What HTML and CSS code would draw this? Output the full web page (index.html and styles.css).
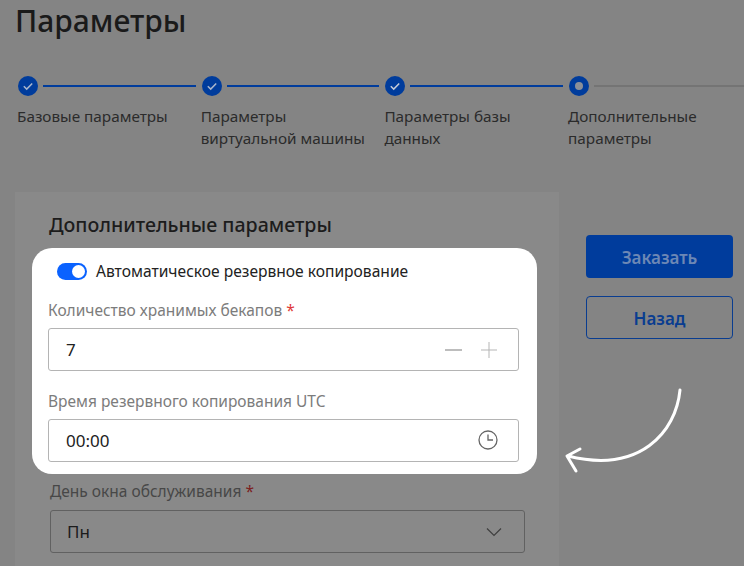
FILE: index.html
```html
<!DOCTYPE html>
<html lang="en">
<head>
  <meta charset="UTF-8">
  <title>Параметры</title>
  <link rel="stylesheet" href="styles.css">
</head>
<body>

<h1 class="page-title">Параметры</h1>

<!-- Stepper -->
<ol class="steps">
  <li class="step done">
    <div class="step-head">
      <svg class="step-icon" viewBox="0 0 20 20"><circle cx="10" cy="10" r="10" fill="#003c9c"/><path d="M5.8 10.3l2.9 2.8 5.5-5.6" fill="none" stroke="#a9b6cc" stroke-width="1.5"/></svg>
      <span class="step-line"></span>
    </div>
    <p>Базовые параметры</p>
  </li>
  <li class="step done">
    <div class="step-head">
      <svg class="step-icon" viewBox="0 0 20 20"><circle cx="10" cy="10" r="10" fill="#003c9c"/><path d="M5.8 10.3l2.9 2.8 5.5-5.6" fill="none" stroke="#a9b6cc" stroke-width="1.5"/></svg>
      <span class="step-line"></span>
    </div>
    <p>Параметры виртуальной машины</p>
  </li>
  <li class="step done">
    <div class="step-head">
      <svg class="step-icon" viewBox="0 0 20 20"><circle cx="10" cy="10" r="10" fill="#003c9c"/><path d="M5.8 10.3l2.9 2.8 5.5-5.6" fill="none" stroke="#c4cbd8" stroke-width="1.5"/></svg>
      <span class="step-line"></span>
    </div>
    <p>Параметры базы данных</p>
  </li>
  <li class="step current">
    <div class="step-head">
      <svg class="step-icon" viewBox="0 0 20 20"><circle cx="10" cy="10" r="10" fill="#003c9c"/><circle cx="10" cy="10" r="4" fill="#8a8f98"/></svg>
      <span class="step-line"></span>
    </div>
    <p>Дополнительные параметры</p>
  </li>
</ol>

<div class="content">
  <section class="card">
    <h2>Дополнительные параметры</h2>
    <div class="dim-field">
      <label class="field-label">День окна обслуживания <span class="req">*</span></label>
      <div class="select">
        <span>Пн</span>
        <svg class="chevron" viewBox="0 0 16 10"><path d="M1 1.5l7 7 7-7" fill="none" stroke="#3f3f3f" stroke-width="1.2"/></svg>
      </div>
    </div>
  </section>

  <aside class="actions">
    <button class="btn btn-primary">Заказать</button>
    <button class="btn btn-outline">Назад</button>
  </aside>
</div>

<!-- Highlighted part of the form -->
<div class="highlight">
  <div class="toggle-row">
    <span class="toggle"><span class="knob"></span></span>
    <span>Автоматическое резервное копирование</span>
  </div>

  <label class="field-label light">Количество хранимых бекапов <span class="req">*</span></label>
  <div class="input">
    <span>7</span>
    <div class="stepper-btns">
      <svg viewBox="0 0 18 18"><path d="M0 9h17" stroke="#9a9a9a" stroke-width="1.3"/></svg>
      <svg viewBox="0 0 18 18"><path d="M1 9h16M9 1v16" stroke="#b5b5b5" stroke-width="1"/></svg>
    </div>
  </div>

  <label class="field-label light second">Время резервного копирования UTC</label>
  <div class="input">
    <span>00:00</span>
    <svg class="clock" viewBox="0 0 20 20"><circle cx="10" cy="10" r="9" fill="none" stroke="#666" stroke-width="1.3"/><path d="M10 4.5V10h5" fill="none" stroke="#666" stroke-width="1.3"/></svg>
  </div>
</div>

<svg class="arrow" viewBox="0 0 744 566"><path d="M680 390C676 432 640 474 568 456M580 449l-13 7 9 15" fill="none" stroke="#fff" stroke-width="3" stroke-linecap="round" stroke-linejoin="round"/></svg>

</body>
</html>
```

FILE: styles.css
```css
* {
  box-sizing: border-box;
}

html, body {
  height: 566px;
}

body {
  position: relative;
  margin: 0;
  padding: 0 0 0 15px;
  overflow: hidden;
  background-color: #848484;
  color: #1c1c1c;
  font-family: "Noto Sans", sans-serif;
}

.page-title {
  margin: 0;
  padding-top: 2px;
  font-size: 30px;
  line-height: 38px;
  font-weight: 500;
  color: #1a1a1a;
}

.steps {
  display: grid;
  grid-template-columns: repeat(3, 183.7px) 1fr;
  margin: 36px 0 0;
  padding: 0 0 0 2px;
  list-style: none;
}

.step-head {
  display: flex;
  align-items: center;
  height: 20px;
}

.step-icon {
  flex: none;
  width: 20px;
  height: 20px;
  margin-left: 1px;
}

.step-line {
  flex: 1;
  height: 2px;
  margin: 0 5px;
  background-color: #003c9c;
}

.step.current .step-line {
  margin-right: 0;
  background-color: #747474;
}

.step p {
  margin: 9px 0 0;
  padding-right: 8px;
  font-size: 15.3px;
  line-height: 22px;
  color: #2b2b2b;
}

.content {
  display: flex;
  align-items: flex-start;
  margin-top: 43px;
}

.card {
  width: 544px;
  height: 400px;
  padding: 20px 34px;
  background-color: #898989;
}

.card h2 {
  margin: 0;
  font-size: 19.6px;
  line-height: 26px;
  font-weight: 500;
  color: #1c1c1c;
}

.dim-field {
  margin-top: 243px;
  margin-left: 1px;
}

.field-label {
  display: block;
  font-size: 15.5px;
  line-height: 20px;
  color: #474747;
}

.field-label.light {
  color: #7c7c7c;
}

.req {
  color: #7c1f1f;
}

.light .req {
  color: #e03a3a;
}

.select {
  display: flex;
  justify-content: space-between;
  align-items: center;
  width: 475px;
  height: 43px;
  margin-top: 9px;
  padding: 0 22px 0 16px;
  border: 1px solid #616161;
  border-radius: 3px;
  font-size: 17px;
}

.chevron {
  width: 16px;
  height: 10px;
}

.actions {
  display: flex;
  flex-direction: column;
  gap: 18px;
  width: 147px;
  margin: 43px 0 0 27px;
}

.btn {
  height: 43px;
  padding-top: 2px;
  border-radius: 4px;
  font-family: inherit;
  font-size: 17px;
  font-weight: 600;
}

.btn-primary {
  border: none;
  background-color: #003c9c;
  color: #6c87b5;
}

.btn-outline {
  border: 1px solid #0a3d90;
  background: none;
  color: #0a3d90;
}

.highlight {
  position: absolute;
  left: 32px;
  top: 248px;
  width: 505px;
  height: 226px;
  padding: 12px 18px 0 16px;
  border-radius: 20px;
  background-color: #fff;
}

.toggle-row {
  display: flex;
  align-items: center;
  gap: 9px;
  height: 24px;
  margin-left: 9px;
  margin-top: -1px;
  font-size: 15.6px;
  color: #222;
}

.toggle {
  display: flex;
  justify-content: flex-end;
  align-items: center;
  width: 30px;
  height: 17px;
  padding-right: 2px;
  border-radius: 9px;
  background-color: #0a62ff;
}

.knob {
  width: 13px;
  height: 13px;
  border-radius: 50%;
  background-color: #fff;
}

.highlight .field-label {
  margin-top: 17px;
}

.highlight .field-label.second {
  margin-top: 20px;
}

.input {
  display: flex;
  justify-content: space-between;
  align-items: center;
  height: 43px;
  margin-top: 8px;
  padding: 0 20px 0 17px;
  border: 1px solid #b4b4b4;
  border-radius: 3px;
  font-size: 17px;
  color: #222;
}

.stepper-btns {
  display: flex;
  gap: 17px;
}

.stepper-btns svg {
  width: 18px;
  height: 18px;
}

.clock {
  width: 20px;
  height: 20px;
  margin-bottom: 1px;
}

.arrow {
  position: absolute;
  left: 0;
  top: 0;
  width: 744px;
  height: 566px;
  pointer-events: none;
}
```
